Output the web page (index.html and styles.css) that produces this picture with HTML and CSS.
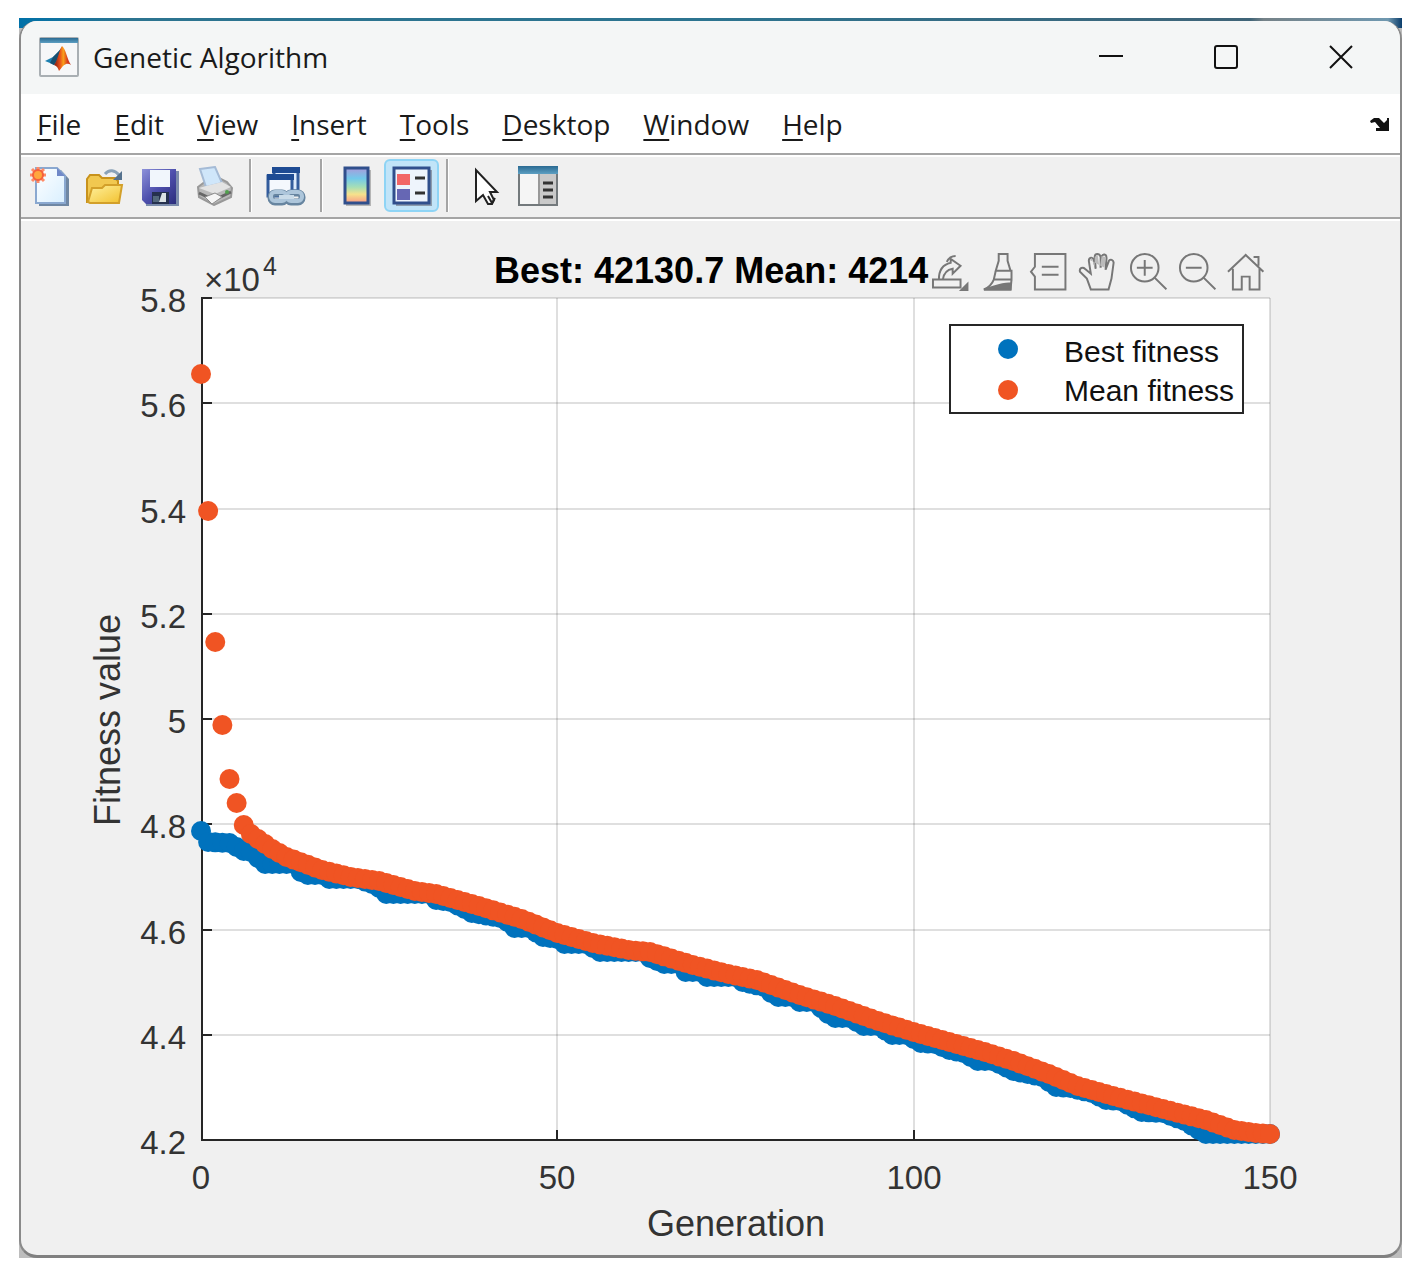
FILE: index.html
```html
<!DOCTYPE html>
<html lang="en">
<head>
  <meta charset="utf-8">
  <title>Genetic Algorithm</title>
  <link rel="stylesheet" href="styles.css">
</head>
<body>
  <div class="desktop">
    <div class="window">
      <header class="title-bar">
        <svg class="app-icon" viewBox="0 0 40 40">
          <defs>
            <linearGradient id="logo" x1="0" x2="1"><stop offset="0" stop-color="#7a1a10"/><stop offset=".35" stop-color="#e8501a"/><stop offset=".55" stop-color="#f9a01b"/><stop offset=".8" stop-color="#d83a1c"/><stop offset="1" stop-color="#c8452a"/></linearGradient>
            <linearGradient id="bar" x1="0" x2="0" y1="0" y2="1"><stop offset="0" stop-color="#2a6a92"/><stop offset="1" stop-color="#5d9fc2"/></linearGradient>
          </defs>
          <rect x="1" y="1" width="38" height="38" rx="1" fill="#f6f7f8" stroke="#a9afb3" stroke-width="2"/>
          <rect x="1" y="1" width="38" height="5" fill="url(#bar)"/>
          <path d="M6 24 L14 20 L19 15 L23 10 L20 22 L15 28 L11 26 Z" fill="#1c7fb0"/>
          <path d="M14 20 L19 15 L22 12 L18 23 L15 28 L11 26 Z" fill="#174f70"/>
          <path d="M15 28 C19 23 20 13 23 9 C27 12 28 22 32 28 C28 25 25 27 20 34 C19 31 18 29 15 28 Z" fill="url(#logo)"/>
        </svg>
        <h1 class="title">Genetic Algorithm</h1>
        <div class="window-buttons">
          <button aria-label="Minimize"><svg viewBox="0 0 26 26"><path d="M1 12H25"/></svg></button>
          <button aria-label="Maximize"><svg viewBox="0 0 26 26"><rect x="2" y="2" width="22" height="22" rx="2"/></svg></button>
          <button aria-label="Close"><svg viewBox="0 0 26 26"><path d="M2 2L24 24M24 2L2 24"/></svg></button>
        </div>
      </header>

      <nav class="menu-bar">
        <button><u>F</u>ile</button>
        <button><u>E</u>dit</button>
        <button><u>V</u>iew</button>
        <button><u>I</u>nsert</button>
        <button><u>T</u>ools</button>
        <button><u>D</u>esktop</button>
        <button><u>W</u>indow</button>
        <button><u>H</u>elp</button>
        <button class="dock" aria-label="Dock figure">
          <svg viewBox="0 0 20 14"><path d="M0 4 L4 1 H9 L14 6 L17 3 V1 H19 V14 H6 V11 H10 L5 5 L1 6 Z" fill="#111"/></svg>
        </button>
      </nav>

      <div class="toolbar">
        <button class="tool" aria-label="New Figure">
          <svg viewBox="0 0 40 40">
            <defs><linearGradient id="page" x1="0" y1="0" x2="1" y2="1"><stop offset="0" stop-color="#fff"/><stop offset="1" stop-color="#d9efff"/></linearGradient></defs>
            <path d="M9 4H31L39 13V40H9Z" fill="#6f87a3"/>
            <path d="M6 2H27L35 10V37H6Z" fill="url(#page)" stroke="#8aa8d0" stroke-width="2"/>
            <path d="M27 2V10H35Z" fill="#7088c8"/>
            <path d="M0 9H16M8 1V17M2 3L14 15M14 3L2 15" stroke="#ff8a66" stroke-width="3"/>
            <circle cx="8" cy="9" r="5" fill="#ffa63d" stroke="#f4603c" stroke-width="2"/>
          </svg>
        </button>
        <button class="tool" aria-label="Open File">
          <svg viewBox="0 0 40 40">
            <defs><linearGradient id="folder" x1="0" y1="0" x2="1" y2="1"><stop offset="0" stop-color="#fff2a0"/><stop offset="1" stop-color="#f2c12e"/></linearGradient></defs>
            <path d="M2 36V13L5 9H14L17 12H30L33 15V36Z" fill="#f1c850" stroke="#c8921c" stroke-width="2"/>
            <path d="M3 36L7 22H17L20 19H37L34 37H5Z" fill="url(#folder)" stroke="#d3a02a" stroke-width="2"/>
            <path d="M20 8C24 3 30 4 34 9" fill="none" stroke="#8aa2b8" stroke-width="3"/>
            <path d="M37 5V14H28Z" fill="#55718d"/>
          </svg>
        </button>
        <button class="tool" aria-label="Save Figure">
          <svg viewBox="0 0 40 40">
            <defs><linearGradient id="disk" x1="0" y1="0" x2="1" y2="1"><stop offset="0" stop-color="#8d91da"/><stop offset=".5" stop-color="#4e50ad"/><stop offset="1" stop-color="#2b2d7c"/></linearGradient></defs>
            <path d="M5 5H39V40H6Z" fill="#7b8cab"/>
            <path d="M2 3H36V38H6L2 34Z" fill="url(#disk)"/>
            <rect x="10" y="4" width="20" height="17" fill="#f1f6fc"/>
            <rect x="12" y="26" width="17" height="12" fill="#25304e"/>
            <path d="M22 27H26V36H19Z" fill="#dbe2e4"/>
            <path d="M13 30H19V36H13Z" fill="#52677b"/>
          </svg>
        </button>
        <button class="tool" aria-label="Print Figure">
          <svg viewBox="0 0 40 40">
            <path d="M3 21L11 15L12 20L25 17L24 12L32 16L37 22L36 31L19 39L4 31Z" fill="#b8b8b8" stroke="#999" stroke-width="2"/>
            <path d="M5 3L20 1L27 17L11 21Z" fill="#cfe6fa" stroke="#a5bbd6" stroke-width="2"/>
            <path d="M4 22L20 28L36 21L27 16L11 20Z" fill="#e3e3e3"/>
            <path d="M4 27L19 34L36 26" fill="none" stroke="#666" stroke-width="3"/>
            <path d="M10 31L20 27L27 31L17 38Z" fill="#f5f5f5" stroke="#8c8c8c"/>
            <circle cx="32" cy="26" r="2" fill="#50a04c"/>
          </svg>
        </button>
        <span class="separator"></span>
        <button class="tool" aria-label="Link Plot">
          <svg viewBox="0 0 40 40">
            <rect x="8" y="3" width="24" height="22" fill="#dceafb" stroke="#335c9c" stroke-width="3"/>
            <path d="M6 4H34" stroke="#1e4b93" stroke-width="6"/>
            <rect x="2" y="10" width="24" height="20" fill="#f4f8fd" stroke="#335c9c" stroke-width="3"/>
            <path d="M1 11H28" stroke="#1e4b93" stroke-width="6"/>
            <g fill="none" stroke="#6785a0" stroke-width="7"><rect x="5" y="27" width="15" height="9" rx="4"/><rect x="21" y="27" width="15" height="9" rx="4"/></g>
            <g fill="none" stroke="#adc6db" stroke-width="4"><rect x="5" y="26" width="15" height="9" rx="4"/><rect x="21" y="26" width="15" height="9" rx="4"/></g>
            <path d="M13 31H28" stroke="#c9dbe8" stroke-width="4"/>
          </svg>
        </button>
        <span class="separator"></span>
        <button class="tool" aria-label="Insert Colorbar">
          <svg viewBox="0 0 40 40">
            <defs><linearGradient id="rainbow" x1="0" x2="0" y1="0" y2="1"><stop offset="0" stop-color="#a99cdb"/><stop offset=".3" stop-color="#72c9ea"/><stop offset=".55" stop-color="#a7dfb5"/><stop offset=".75" stop-color="#f6e28c"/><stop offset="1" stop-color="#f99a86"/></linearGradient></defs>
            <rect x="9" y="4" width="25" height="36" fill="#b5b5b5"/>
            <rect x="8" y="2" width="23" height="35" fill="url(#rainbow)" stroke="#304f8c" stroke-width="3"/>
          </svg>
        </button>
        <button class="tool active" aria-label="Insert Legend" aria-pressed="true">
          <svg viewBox="0 0 40 40">
            <rect x="4" y="4" width="36" height="36" fill="#8d9cac"/>
            <rect x="2" y="2" width="35" height="35" fill="#eef4fc" stroke="#304f8c" stroke-width="3"/>
            <rect x="5" y="8" width="13" height="11" fill="#f26666"/>
            <rect x="5" y="23" width="13" height="11" fill="#6667b4"/>
            <path d="M23 12H33M23 27H33" stroke="#333" stroke-width="3"/>
          </svg>
        </button>
        <span class="separator"></span>
        <button class="tool" aria-label="Edit Plot">
          <svg viewBox="0 0 40 40">
            <path d="M13 4V35L20 29L25 38H29L31 34L27 26H34Z" fill="#fff" stroke="#222" stroke-width="2"/>
            <path d="M25 30L29 37L32 32" fill="none" stroke="#222" stroke-width="2"/>
          </svg>
        </button>
        <button class="tool" aria-label="Open Property Inspector">
          <svg viewBox="0 0 40 40">
            <rect x="1" y="1" width="38" height="38" fill="#f5f5f5" stroke="#73797c" stroke-width="2"/>
            <rect x="21" y="8" width="17" height="30" fill="#c9c9c9"/>
            <path d="M21 8V38" stroke="#999" stroke-width="2"/>
            <rect x="0" y="0" width="40" height="8" fill="url(#bar)"/>
            <path d="M25 17H35M25 24H35M25 31H35" stroke="#333" stroke-width="3"/>
          </svg>
        </button>
      </div>

      <main class="figure">
        <svg class="chart" viewBox="0 0 1379 1034" role="img" aria-label="Fitness value by generation">
          <rect x="180" y="77" width="1069" height="842" fill="#fff"/>
          <g id="grid" class="grid"></g>
          <path class="axis" d="M181 76V919H1249"/>
          <g id="ticks" class="axis"></g>
          <g id="labels" class="tick-label"></g>
          <text class="tick-label" x="183" y="70">×10</text>
          <text class="exponent" x="242" y="54">4</text>
          <text class="chart-title" x="473" y="62">Best: 42130.7 Mean: 4214</text>
          <text class="axis-label" x="715" y="1015" text-anchor="middle">Generation</text>
          <text class="axis-label" transform="translate(99 499) rotate(-90)" text-anchor="middle">Fitness value</text>
          <g id="best" fill="#0072bd"></g>
          <g id="mean" fill="#f05423"></g>
          <g class="legend">
            <rect x="929" y="104" width="293" height="88"/>
            <circle cx="987" cy="128" r="10" fill="#0072bd"/>
            <circle cx="987" cy="169" r="10" fill="#f05423"/>
            <text x="1043" y="141">Best fitness</text>
            <text x="1043" y="180">Mean fitness</text>
          </g>
        </svg>

        <div class="axes-toolbar">
          <button aria-label="Export">
            <svg viewBox="0 0 40 40"><path d="M2 28H30V36H2ZM8 28C8 19 11 13 20 11V7L30 14L22 22V17C16 18 13 21 12 28M16 10C18 6 21 4 25 4"/><path d="M38 30V40H28Z" fill="#777" stroke="none"/></svg>
          </button>
          <button aria-label="Brush">
            <svg viewBox="0 0 40 40"><path d="M19 2H28V9L31 19H16L19 9ZM16 19H32V28H14ZM14 28C12 33 9 36 4 38H31L32 28"/><path d="M4 38C14 36 22 31 31 32V38Z" fill="#777"/></svg>
          </button>
          <button aria-label="Data Tips">
            <svg viewBox="0 0 40 40"><path d="M6 2H37V38H6V25L2 20L6 15ZM13 15H30M13 23H30"/></svg>
          </button>
          <button aria-label="Pan">
            <svg viewBox="0 0 40 40"><path d="M13 38L9 27L2 20C1 16 5 15 7 17L13 22L11 9C11 5 15 5 16 8L18 17L17 5C17 1 22 1 23 5V16L24 5C25 1 29 2 29 6L28 18L31 10C32 6 37 8 36 12L34 27L31 38Z"/><path d="M12 8L14 6L17 16V5L20 3L22 17L24 4L28 5L27 16L23 14Z" fill="#bbb" stroke="none"/></svg>
          </button>
          <button aria-label="Zoom In">
            <svg viewBox="0 0 40 40"><circle cx="17" cy="16" r="14"/><path d="M27 26L39 38M9 16H25M17 8V24"/></svg>
          </button>
          <button aria-label="Zoom Out">
            <svg viewBox="0 0 40 40"><circle cx="17" cy="16" r="14"/><path d="M27 26L39 38M9 16H25"/></svg>
          </button>
          <button aria-label="Restore View">
            <svg viewBox="0 0 40 40"><path d="M2 20L20 3L38 20M7 17V38H16V25H24V38H34V17M28 5H33V14"/></svg>
          </button>
        </div>
      </main>
    </div>
  </div>

  <script>
    // Plot area inside the chart's viewBox
    const plot = { left: 180, right: 1249, top: 77, bottom: 919 };
    const generations = 150;

    // [generation, y] points, the generations between them are interpolated
    const mean = [
      [0, 153], [1, 290], [2, 421], [3, 504], [4, 558], [5, 582], [6, 604], [7, 613],
      [10, 628], [12, 636], [17, 649], [21, 656], [25, 660], [30, 670], [33, 673],
      [39, 685], [45, 698], [50, 712], [55, 722], [60, 729], [63, 731], [69, 744],
      [74, 753], [78, 759], [84, 774], [89, 785], [95, 800], [100, 811], [106, 823],
      [110, 831], [114, 840], [119, 853], [123, 865], [128, 875], [135, 888],
      [141, 899], [145, 909], [148, 912], [150, 913]
    ];
    const best = [
      [0, 610], [1, 621], [4, 622], [6, 630], [7, 631], [8, 637], [9, 643], [13, 643],
      [14, 651], [15, 654], [17, 654], [18, 658], [22, 658], [24, 663], [25, 667], [26, 673],
      [32, 673], [33, 679], [35, 681], [37, 688], [38, 692], [42, 697], [43, 701], [44, 707], [46, 707],
      [48, 716], [50, 718], [51, 723], [54, 723], [56, 731], [62, 731], [63, 737],
      [65, 743], [67, 743], [68, 751], [70, 751], [71, 756], [75, 756], [76, 761],
      [79, 766], [80, 772], [81, 776], [83, 776], [84, 781], [86, 781], [87, 787], [88, 793], [89, 797],
      [91, 797], [93, 805], [95, 805], [97, 814], [99, 814], [101, 822], [103, 823],
      [105, 829], [107, 832], [109, 840], [111, 840], [112, 843], [114, 850], [118, 856],
      [120, 866], [122, 867], [125, 872], [127, 879], [129, 880], [132, 891],
      [135, 892], [138, 900], [140, 909], [141, 913], [150, 913]
    ];

    function add(parent, tag, attributes, text) {
      const el = document.createElementNS('http://www.w3.org/2000/svg', tag);
      for (const name in attributes) {
        el.setAttribute(name, attributes[name]);
      }
      if (text) {
        el.textContent = text;
      }
      document.getElementById(parent).appendChild(el);
    }

    function drawSeries(parent, points) {
      let i = 0;
      for (let g = 0; g <= generations; g++) {
        while (i < points.length - 2 && g > points[i + 1][0]) {
          i++;
        }
        const [g0, y0] = points[i];
        const [g1, y1] = points[i + 1];
        const y = y0 + (y1 - y0) * (g - g0) / (g1 - g0);
        const x = plot.left + (plot.right - plot.left) * g / generations;
        add(parent, 'circle', { cx: x, cy: y, r: 10 });
      }
    }

    // Horizontal grid lines and y labels
    ['5.8', '5.6', '5.4', '5.2', '5', '4.8', '4.6', '4.4', '4.2'].forEach((label, i) => {
      const y = Math.round(plot.top + (plot.bottom - plot.top) * i / 8);
      if (i < 8) {
        add('grid', 'path', { d: `M${plot.left} ${y}H${plot.right}` });
        add('ticks', 'path', { d: `M${plot.left} ${y}h11` });
      }
      add('labels', 'text', { x: 165, y: y + 14, 'text-anchor': 'end' }, label);
    });

    // Vertical grid lines and x labels
    ['0', '50', '100', '150'].forEach((label, i) => {
      const x = Math.round(plot.left + (plot.right - plot.left) * i / 3);
      if (i > 0) {
        add('grid', 'path', { d: `M${x} ${plot.top}V${plot.bottom}` });
        add('ticks', 'path', { d: `M${x} ${plot.bottom}v-10` });
      }
      add('labels', 'text', { x: x, y: 968, 'text-anchor': 'middle' }, label);
    });

    drawSeries('best', best);
    drawSeries('mean', mean);
  </script>
</body>
</html>
```
FILE: styles.css
```css
* {
  box-sizing: border-box;
}

body {
  margin: 0;
  padding: 18px 23px 20px 19px;
  background: #fff;
  font-family: "Open Sans", sans-serif;
  font-size: 28px;
  color: #1a1a1a;
}

button {
  display: flex;
  align-items: center;
  justify-content: center;
  padding: 0;
  border: none;
  background: none;
  font: inherit;
  color: inherit;
}

svg {
  display: block;
}

.desktop {
  padding-top: 3px;
  background:
    linear-gradient(90deg, #0071a8, #2c7490 8%, #2c7490 50%, #3f6478 89%, #758288 90%, #6f98b0 99%, #0b3d6b) top / 100% 10px no-repeat,
    #bdbdbd;
}

.window {
  overflow: hidden;
  border: 2px solid #8a8a8a;
  border-top: none;
  border-bottom: 3px solid #808080;
  border-radius: 18px;
  background: #f0f0f0;
}

/* Title bar */
.title-bar {
  display: flex;
  align-items: center;
  height: 73px;
  padding: 0 2px 2px 18px;
  background: #f4f6f6;
}

.app-icon {
  width: 40px;
  height: 40px;
}

.title {
  flex: 1;
  margin: 0 0 0 14px;
  font-size: 28px;
  font-weight: normal;
}

.window-buttons {
  display: flex;
}

.window-buttons button {
  width: 115px;
  height: 70px;
}

.window-buttons svg {
  width: 26px;
  height: 26px;
  fill: none;
  stroke: #111;
  stroke-width: 2;
}

/* Menu */
.menu-bar {
  display: flex;
  align-items: center;
  gap: 33px;
  height: 61px;
  padding: 0 10px 0 16px;
  border-bottom: 2px solid #a5a5a5;
  background: #fff;
}

.menu-bar u {
  text-decoration-thickness: 2px;
  text-underline-offset: 4px;
  text-decoration-skip-ink: none;
}

.dock {
  margin-left: auto;
}

.dock svg {
  width: 20px;
  height: 14px;
}

/* Toolbar */
.toolbar {
  display: flex;
  align-items: center;
  height: 64px;
  padding: 0 0 3px 1px;
  border-top: 2px solid #fff;
  border-bottom: 2px solid #a5a5a5;
}

.tool {
  width: 55px;
  height: 53px;
  border: 2px solid transparent;
  border-radius: 6px;
}

.tool.active {
  border-color: #8ed4f5;
  background: #c1e4f8;
}

.tool svg {
  width: 40px;
  height: 40px;
}

.separator {
  width: 3px;
  height: 53px;
  margin: 0 6px 0 7px;
  border-left: 2px solid #a5a5a5;
  border-right: 1px solid #fff;
}

/* Figure */
.figure {
  position: relative;
  border-top: 2px solid #fff;
  font-family: "Liberation Sans", sans-serif;
}

.chart {
  width: 100%;
  height: auto;
}

.grid {
  stroke: #262626;
  stroke-opacity: 0.15;
  stroke-width: 2;
}

.axis {
  fill: none;
  stroke: #262626;
  stroke-width: 2;
}

.tick-label {
  font-size: 33px;
  fill: #333;
}

.exponent {
  font-size: 25px;
  fill: #333;
}

.axis-label {
  font-size: 36px;
  fill: #333;
}

.chart-title {
  font-size: 36px;
  font-weight: bold;
  fill: #000;
}

.legend rect {
  fill: #fff;
  stroke: #262626;
  stroke-width: 2;
}

.legend text {
  font-size: 30px;
  fill: #111;
}

/* Icons over the top right corner of the axes */
.axes-toolbar {
  position: absolute;
  top: 3%;
  right: 9.4%;
  display: flex;
  width: 25%;
}

.axes-toolbar button {
  flex: 1;
}

.axes-toolbar svg {
  width: 80%;
  fill: none;
  stroke: #777;
  stroke-width: 2;
}
```
